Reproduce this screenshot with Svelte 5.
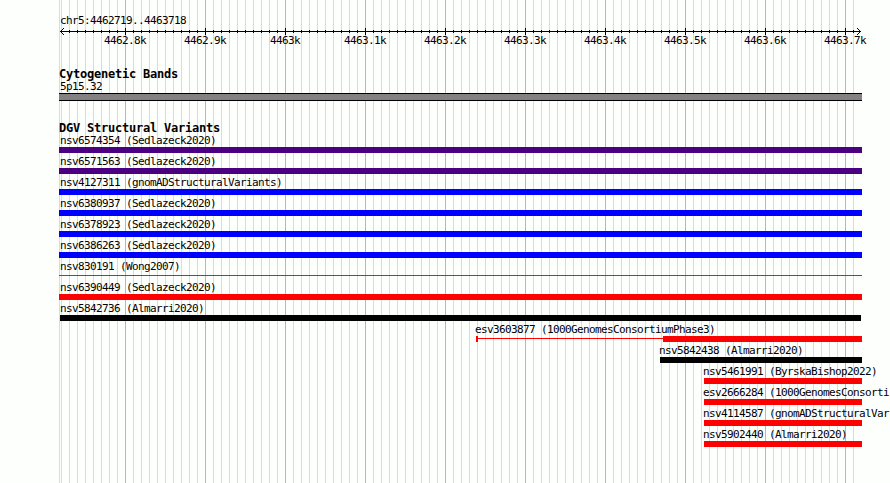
<script>
    const first = 61;
    const spacing = 8;

    const gridLines = Array.from({ length: 100 }, (_, i) => {
        const x = first + i * spacing;
        return { x, major: i % 10 === 8 };
    });
    const ticks = gridLines.slice(1);

    const rulerLabels = [
        '4462.8k', '4462.9k', '4463k', '4463.1k', '4463.2k',
        '4463.3k', '4463.4k', '4463.5k', '4463.6k', '4463.7k'
    ];

    const variants = [
        { name: 'nsv6574354 (Sedlazeck2020)', start: 59, end: 862, type: 'indigo' },
        { name: 'nsv6571563 (Sedlazeck2020)', start: 59, end: 862, type: 'indigo' },
        { name: 'nsv4127311 (gnomADStructuralVariants)', start: 59, end: 862, type: 'blue' },
        { name: 'nsv6380937 (Sedlazeck2020)', start: 59, end: 862, type: 'blue' },
        { name: 'nsv6378923 (Sedlazeck2020)', start: 59, end: 862, type: 'blue' },
        { name: 'nsv6386263 (Sedlazeck2020)', start: 59, end: 862, type: 'blue' },
        { name: 'nsv830191 (Wong2007)', start: 59, end: 862, type: 'thin' },
        { name: 'nsv6390449 (Sedlazeck2020)', start: 59, end: 862, type: 'red' },
        { name: 'nsv5842736 (Almarri2020)', start: 60, end: 861, type: 'black' },
        { name: 'esv3603877 (1000GenomesConsortiumPhase3)', start: 476, end: 862, type: 'red', thick: 663 },
        { name: 'nsv5842438 (Almarri2020)', start: 660, end: 862, type: 'black' },
        { name: 'nsv5461991 (ByrskaBishop2022)', start: 704, end: 862, type: 'red' },
        { name: 'esv2666284 (1000GenomesConsorti', start: 704, end: 862, type: 'red' },
        { name: 'nsv4114587 (gnomADStructuralVar', start: 704, end: 862, type: 'red' },
        { name: 'nsv5902440 (Almarri2020)', start: 704, end: 862, type: 'red' }
    ];

    // labels of full width features sit just inside the panel edge
    function labelOffset(variant) {
        return Math.max(60, variant.start - 1) - variant.start;
    }
</script>

<div class="browser">
  <svg class="grid" width="890" height="483" shape-rendering="crispEdges">
    <rect class="minor" x="59" y="0" width="1" height="483" />
    {#each gridLines as line}
      <rect class={line.major ? 'major' : 'minor'} x={line.x} y="0" width="1" height="483" />
    {/each}
  </svg>

  <div class="tracks">
    <div class="region">chr5:4462719..4463718</div>
    <svg class="ruler" width="890" height="22">
      <g shape-rendering="crispEdges">
        <rect x="60" y="4" width="801" height="1" />
        {#each ticks as tick}
          <rect x={tick.x} y={tick.major ? 1 : 3} width="1" height={tick.major ? 7 : 3} />
        {/each}
      </g>
      <path d="M64 1 L60.5 4.5 L64 8 M857 1 L860.5 4.5 L857 8" />
      {#each rulerLabels as label, i}
        <text x={125 + i * 80 - Math.floor(label.length * 3)} y="17">{label}</text>
      {/each}
    </svg>

    <h2 class="cytogenetic">Cytogenetic Bands</h2>
    <div class="band-label">5p15.32</div>
    <div class="band"></div>

    <h2 class="structural">DGV Structural Variants</h2>
    {#each variants as variant}
      <div class="variant" style="margin-left: {variant.start}px">
        <div class="label" style="text-indent: {labelOffset(variant)}px">{variant.name}</div>
        <div class="feature" style="width: {variant.end - variant.start}px">
          {#if variant.thick}
            <span class="cap"></span>
            <span class="connector"></span>
            <span class="bar {variant.type}" style="width: {variant.end - variant.thick}px"></span>
          {:else}
            <span class="bar full {variant.type}"></span>
          {/if}
        </div>
      </div>
    {/each}
  </div>
</div>

<style>
    :global(body) {
        margin: 0;
        background: #fdfffc;
    }

    .browser {
        position: relative;
        width: 890px;
        height: 483px;
        overflow: hidden;
        background: #fdfffc;
        color: #000;
        font-family: "DejaVu Sans Mono", monospace;
        font-size: 11px;
        letter-spacing: -0.623px;
    }

    .grid {
        position: absolute;
        top: 0;
        left: 0;
    }

    .minor {
        fill: #afeeea;
    }

    .major {
        fill: #87c8e8;
    }

    .tracks {
        position: relative;
        padding-top: 14px;
    }

    .region, .band-label, .label {
        line-height: 13px;
        height: 13px;
        white-space: nowrap;
    }

    .region {
        padding-left: 60px;
    }

    .ruler {
        display: block;
    }

    .ruler path {
        fill: none;
        stroke: #000;
    }

    h2 {
        margin: 0;
        padding-left: 59px;
        font-size: 12px;
        line-height: 13px;
        height: 13px;
        font-weight: bold;
        letter-spacing: -0.225px;
    }

    .cytogenetic {
        margin-top: 19px;
    }

    .band-label {
        margin-top: -1px;
        padding-left: 60px;
    }

    .band {
        box-sizing: border-box;
        width: 803px;
        height: 8px;
        margin: 0 0 21px 59px;
        background: #848084;
        border-top: 1px solid #000;
        border-bottom: 1px solid #000;
    }

    .structural {
        margin-bottom: -2px;
    }

    .variant {
        height: 21px;
    }

    .label {
        box-sizing: border-box;
        height: 14px;
        padding-top: 1px;
    }

    .feature {
        display: flex;
        height: 6px;
    }

    .full {
        width: 100%;
    }

    .indigo {
        background: #4b0082;
    }

    .blue {
        background: #0000ff;
    }

    .red {
        background: #ff0000;
    }

    .black {
        background: #000;
    }

    .thin {
        height: 1px;
        margin-top: 2px;
        background: #844c14;
    }

    .cap {
        width: 2px;
        background: #ff0000;
    }

    .connector {
        flex: 1;
        height: 1px;
        margin-top: 2px;
        background: #ff0000;
    }
</style>
